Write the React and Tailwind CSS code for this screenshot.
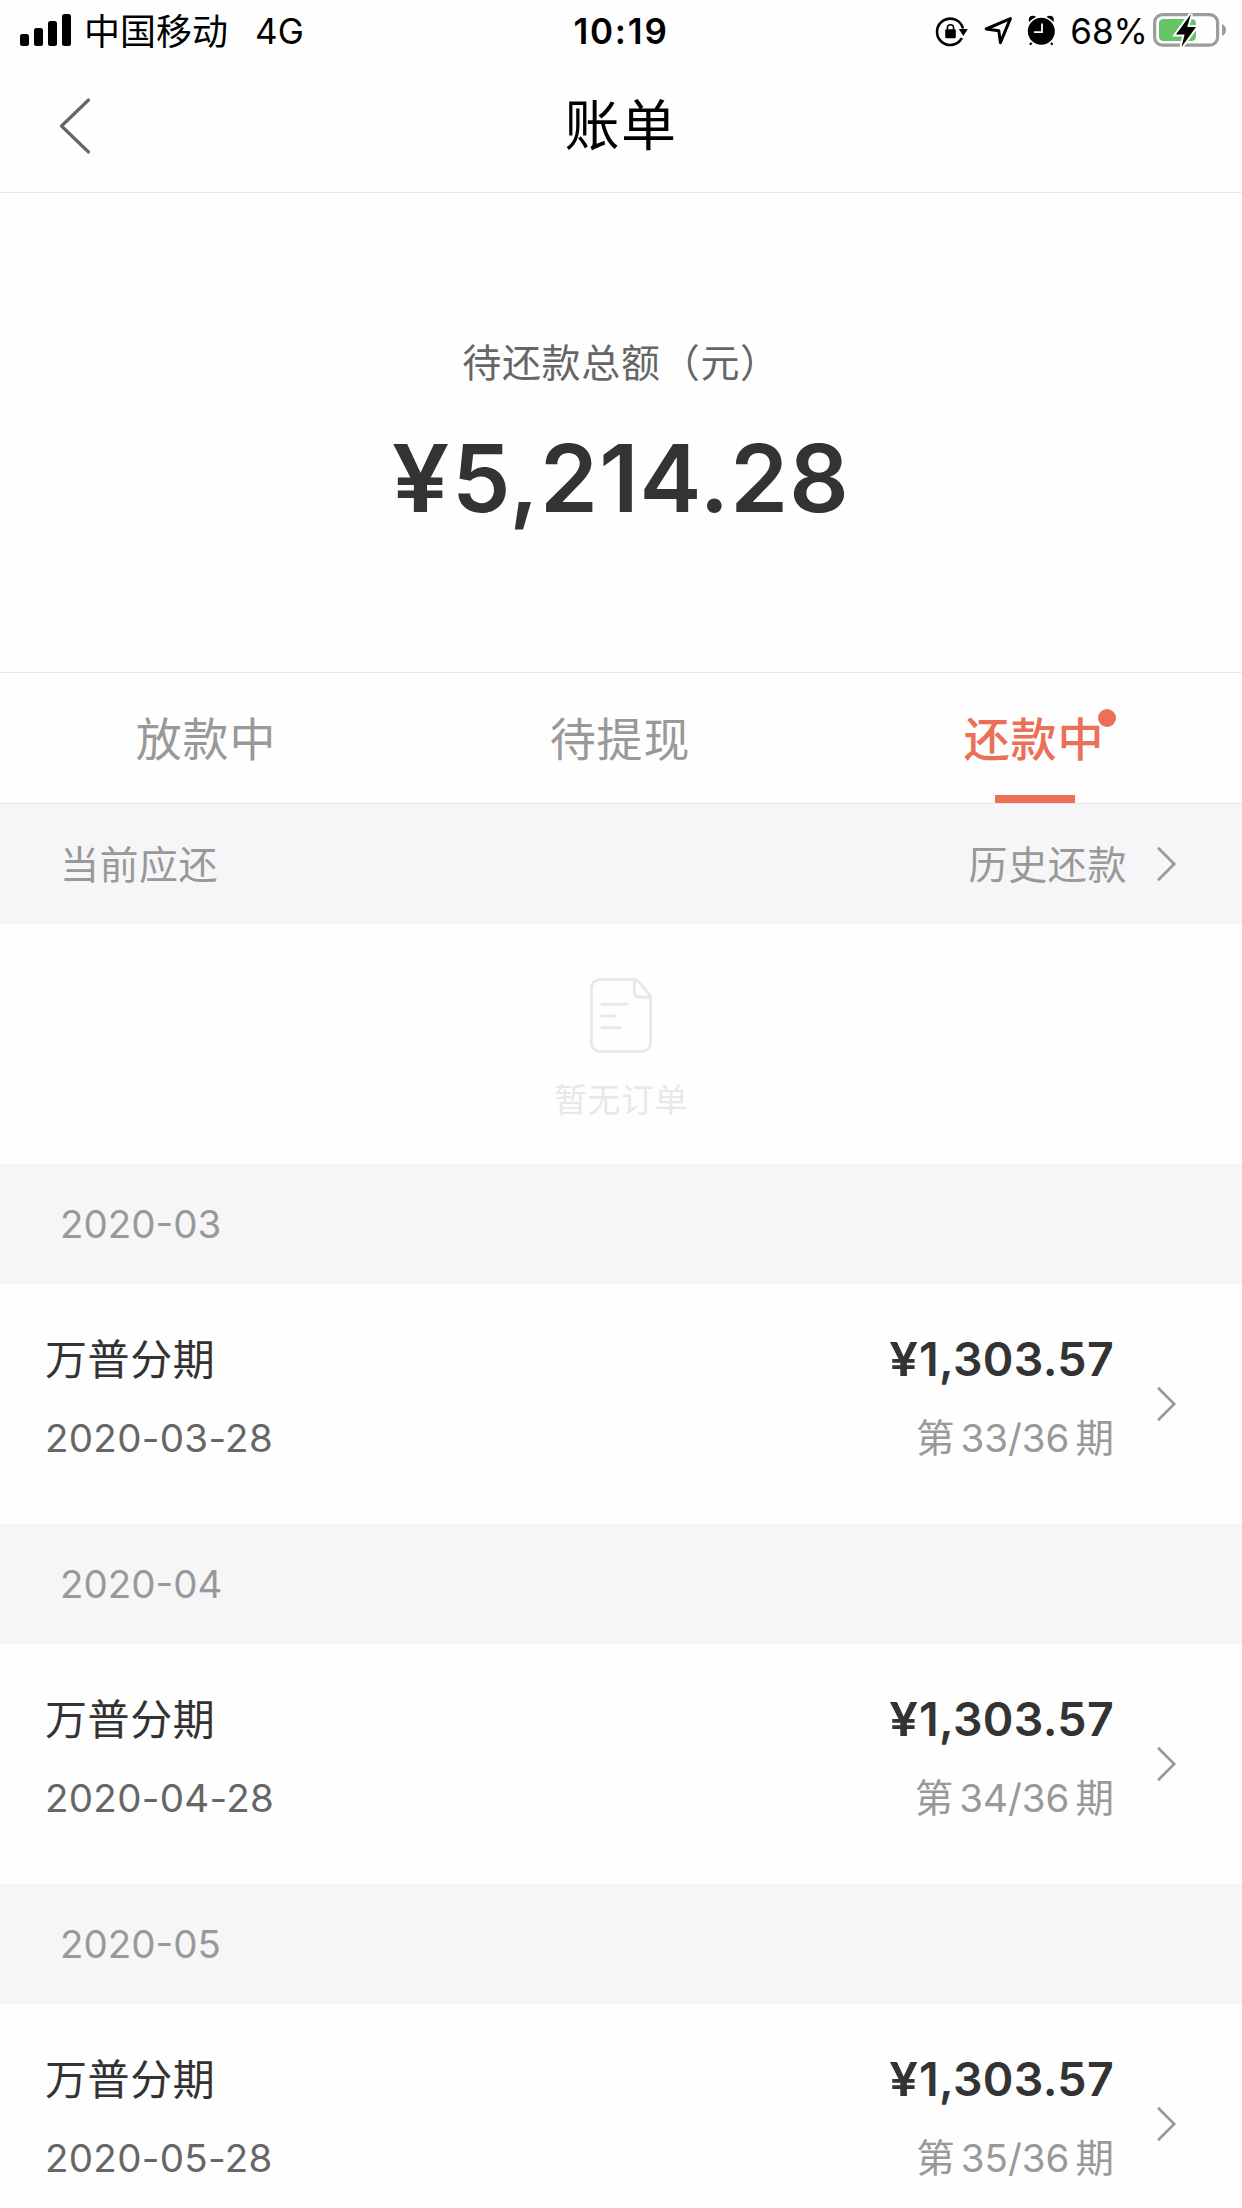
const BILLS = [
  { month: "2020-03", name: "万普分期", due: "2020-03-28", amount: "1,303.57", term: "33/36" },
  { month: "2020-04", name: "万普分期", due: "2020-04-28", amount: "1,303.57", term: "34/36" },
  { month: "2020-05", name: "万普分期", due: "2020-05-28", amount: "1,303.57", term: "35/36" },
];

const TABS = [
  { label: "放款中" },
  { label: "待提现" },
  { label: "还款中", active: true },
];

function Chevron() {
  return (
    <svg width="22" height="38" viewBox="0 0 22 38" fill="none" stroke="#999" strokeWidth="2.7" className="shrink-0">
      <path d="M3 2.7 19.2 19 3 35.3" />
    </svg>
  );
}

function StatusBar() {
  return (
    <div className="grid h-[60px] grid-cols-3 items-center text-[35px] leading-[62px] text-black">
      <div className="flex h-[60px] items-start pl-5">
        <svg width="51" height="60" viewBox="0 0 51 60">
          <rect x="0" y="34" width="9" height="12" rx="2.5" />
          <rect x="14" y="28" width="9" height="18" rx="2.5" />
          <rect x="28" y="21" width="9" height="25" rx="2.5" />
          <rect x="42" y="14" width="9" height="32" rx="2.5" />
        </svg>
        <span className="ml-[13px] text-[36px] leading-[64px]">中国移动</span>
        <span className="ml-[27px]">4G</span>
      </div>
      <p className="h-[60px] text-center font-semibold tracking-[1.8px]">10:19</p>
      <div className="flex h-[60px] items-start justify-end pr-[14px]">
        <svg width="95" height="60" viewBox="932 0 95 60" fill="none" stroke="#000">
          <path d="M961.8 38.2A13.2 13.2 0 1 1 963 28.5" strokeWidth="2.6" />
          <path d="M958.8 29h9l-4.5 7z" fill="#000" stroke="none" />
          <rect x="945.2" y="29.3" width="10.6" height="9" rx="1.4" fill="#000" stroke="none" />
          <path d="M947.4 30v-2.2a3.1 3.1 0 0 1 6.2 0V30" strokeWidth="1.6" />
          <path d="M986.2 29 1010.4 18.6 1000.4 42.6 998.8 30.8z" strokeWidth="3" strokeLinejoin="round" />
        </svg>
        <svg width="30" height="60" viewBox="1027 0 30 60" fill="none">
          <path d="M1034 40.5 1030.5 44M1048.5 40.5 1052 44" stroke="#000" strokeWidth="2.2" strokeLinecap="round" />
          <circle cx="1032.8" cy="19.8" r="4" fill="#000" />
          <circle cx="1049.8" cy="19.8" r="4" fill="#000" />
          <circle cx="1041.3" cy="31.3" r="14.3" fill="#000" stroke="#fefefe" strokeWidth="1.6" />
          <path d="M1042 23.5v8.7h-8" stroke="#fefefe" strokeWidth="1.8" />
        </svg>
        <span className="ml-[13px]">68%</span>
        <svg width="76" height="60" viewBox="1152 0 76 60" className="ml-[4px]" fill="none">
          <rect x="1154.6" y="14.6" width="63" height="30.6" rx="8" stroke="#9c9c9c" strokeWidth="3.2" />
          <path d="M1222 24c5.4 2 5.4 10 0 12z" fill="#9c9c9c" />
          <rect x="1159" y="19" width="37" height="22" rx="4.5" fill="#65c466" />
          <path d="M1191 14 1176 34.5h8.6L1181.5 47 1196 27h-8.8z" fill="#000" stroke="#fefefe" strokeWidth="4" paintOrder="stroke" />
        </svg>
      </div>
    </div>
  );
}

function Header() {
  return (
    <header className="grid h-[133px] grid-cols-3 items-center border-b border-[#e6e6e6]">
      <svg width="32" height="58" viewBox="0 0 32 58" fill="none" stroke="#666" strokeWidth="3.2" strokeLinecap="round" strokeLinejoin="round" className="ml-[59px]">
        <path d="M29.5 3 2.5 29l27 26" />
      </svg>
      <h1 className="pb-[2px] text-center text-[55px] leading-[70px] tracking-[1.5px] text-black">账单</h1>
    </header>
  );
}

function Tab({ label, active }) {
  return (
    <div className="flex flex-1 justify-center">
      <div className={active ? "relative font-medium text-[#eb7057]" : "relative text-[#999]"}>
        <span className="block h-[130px] pr-[2px] leading-[133px]">{label}</span>
        {active && <i className="absolute top-[36px] -right-[10px] size-[18px] rounded-full bg-[#eb7057]" />}
        {active && <i className="absolute bottom-0 left-1/2 h-2 w-20 -translate-x-1/2 bg-[#eb7057]" />}
      </div>
    </div>
  );
}

function Yuan() {
  return <span className="mr-[0.015em] inline-block origin-right scale-x-110">¥</span>;
}

function Bill({ month, name, due, amount, term }) {
  return (
    <section>
      <h2 className="h-[120px] bg-[#f6f6f8] pl-[60px] text-[38.5px] leading-[120px] text-[#999]">{month}</h2>
      <div className="flex h-[240px] items-center justify-between pr-[65px] pl-[45px]">
        <div className="pb-[10px]">
          <p className="text-[42px] leading-[78px] tracking-[0.6px] text-[#333]">{name}</p>
          <p className="text-[38.5px] leading-[78px] tracking-[0.3px] text-[#666]">{due}</p>
        </div>
        <div className="flex items-center">
          <div className="pb-[10px] text-right">
            <p className="text-[46.5px] leading-[76px] font-semibold tracking-[0.3px] text-[#333]"><Yuan />{amount}</p>
            <p className="pt-[2px] text-[38.5px] leading-[78px] text-[#999]">第<span className="mx-[6px]">{term}</span>期</p>
          </div>
          <div className="ml-[41px]"><Chevron /></div>
        </div>
      </div>
    </section>
  );
}

export default function App() {
  return (
    <main className="h-[2208px] w-[1242px] overflow-hidden bg-[#fefefe] font-['Inter','Noto_Sans_CJK_SC',sans-serif] whitespace-nowrap">
      <StatusBar />
      <Header />

      <section className="flex h-[479px] flex-col items-center pt-[140px]">
        <p className="text-[39px] leading-[60px] tracking-[0.7px] text-[#666]">待还款总额（元）</p>
        <p className="mt-[30px] pl-[5px] text-[93px] leading-[110px] font-semibold tracking-[1.1px] text-[#333]"><Yuan />5,214.28</p>
      </section>

      <nav className="flex h-[132px] border-y border-[#e6e6e6] text-[46px] tracking-[0.8px]">
        {TABS.map((t) => <Tab key={t.label} {...t} />)}
      </nav>

      <div className="flex h-[120px] items-center justify-between bg-[#f6f6f8] pr-[65px] pl-[60px] text-[39px] text-[#999]">
        <span className="pt-[2px] tracking-[0.5px]">当前应还</span>
        <span className="flex items-center gap-[28px]"><span className="pt-[2px] tracking-[0.6px]">历史还款</span> <Chevron /></span>
      </div>

      <div className="flex h-[240px] flex-col items-center pt-[53px]">
        <svg width="66" height="77" viewBox="0 0 66 78" fill="none" stroke="#e8e8e8" strokeWidth="3" strokeLinecap="round" strokeLinejoin="round">
          <path d="M46 2.5H12A9 9 0 0 0 3 11.500V66.500A9 9 0 0 0 12 75.500H54A9 9 0 0 0 63 66.500V21C63 19 62 18 61 16.500L50.500 4.500C49 3 48 2.500 46 2.500z" />
          <path d="M46.500 3V14.500Q46.500 20.500 52.500 20.500H62" />
          <path d="M13.500 27.500H39M13.500 39.500H27.500M13.500 51.500H32" />
        </svg>
        <p className="mt-[16px] text-[33px] leading-[60px] tracking-[0.5px] text-[#e8e8e8]">暂无订单</p>
      </div>

      {BILLS.map((b) => <Bill key={b.month} {...b} />)}
    </main>
  );
}
